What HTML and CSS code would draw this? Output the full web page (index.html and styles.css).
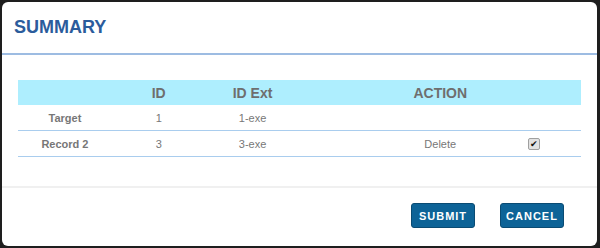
FILE: index.html
```html
<!DOCTYPE html>
<html lang="en">
<head>
    <meta charset="UTF-8">
    <meta name="viewport" content="width=device-width, initial-scale=1.0">
    <title>Summary</title>
    <link rel="stylesheet" href="styles.css">
</head>
<body>
    <div class="modal">
        <div class="modal-header">
            <h2>SUMMARY</h2>
        </div>

        <div class="modal-body">
            <table class="summary">
                <thead>
                    <tr>
                        <th></th>
                        <th>ID</th>
                        <th>ID Ext</th>
                        <th colspan="3">ACTION</th>
                    </tr>
                </thead>
                <tbody>
                    <tr>
                        <td class="name">Target</td>
                        <td>1</td>
                        <td>1-exe</td>
                        <td></td>
                        <td></td>
                        <td></td>
                    </tr>
                    <tr>
                        <td class="name">Record 2</td>
                        <td>3</td>
                        <td>3-exe</td>
                        <td></td>
                        <td>Delete</td>
                        <td><span class="check">&#10004;</span></td>
                    </tr>
                </tbody>
            </table>
        </div>

        <div class="modal-footer">
            <button type="button" class="btn">SUBMIT</button>
            <button type="button" class="btn">CANCEL</button>
        </div>
    </div>
</body>
</html>
```

FILE: styles.css
```css
body {
    margin: 0;
    background-color: #1e1e1e;
    font-family: Arial, "Liberation Sans", sans-serif;
}
.modal {
    margin: 2px 3px 2px 2px;
    height: 244px;
    background: white;
    border-radius: 6px;
    box-sizing: border-box;
}
.modal-header {
    padding: 15px 12px 16px;
    border-bottom: 2px solid #9dbce2;
}
.modal-header h2 {
    margin: 0;
    font-size: 18px;
    line-height: 20px;
    color: #2b5c9c;
}
.modal-body {
    padding: 25px 16px 29px;
    border-bottom: 2px solid #f0f0f0;
}
.summary {
    width: 100%;
    border-collapse: collapse;
    table-layout: fixed;
}
.summary th {
    height: 25px;
    padding: 0;
    background-color: #aeeefe;
    color: #6e6e6e;
    font-size: 14px;
    font-weight: bold;
    text-align: center;
    vertical-align: middle;
}
.summary td {
    height: 25px;
    padding: 0;
    border-bottom: 1px solid #a9cdee;
    color: #777;
    font-size: 11px;
    text-align: center;
    vertical-align: middle;
}
.summary td.name {
    font-weight: bold;
}
.check {
    display: inline-block;
    width: 10px;
    height: 10px;
    line-height: 10px;
    border: 1px solid #a0a0a0;
    border-radius: 2px;
    background: #e2e2e2;
    color: #111;
    font-size: 9px;
    vertical-align: middle;
}
.modal-footer {
    display: flex;
    justify-content: flex-end;
    gap: 25px;
    padding: 15px 33px 0 0;
}
.btn {
    width: 64px;
    height: 25px;
    padding: 0;
    background-color: #0d6397;
    border: 1px solid #0a4b73;
    border-radius: 3px;
    color: white;
    font-family: Arial, "Liberation Sans", sans-serif;
    font-size: 11px;
    font-weight: bold;
    letter-spacing: 1px;
    cursor: pointer;
}
```
